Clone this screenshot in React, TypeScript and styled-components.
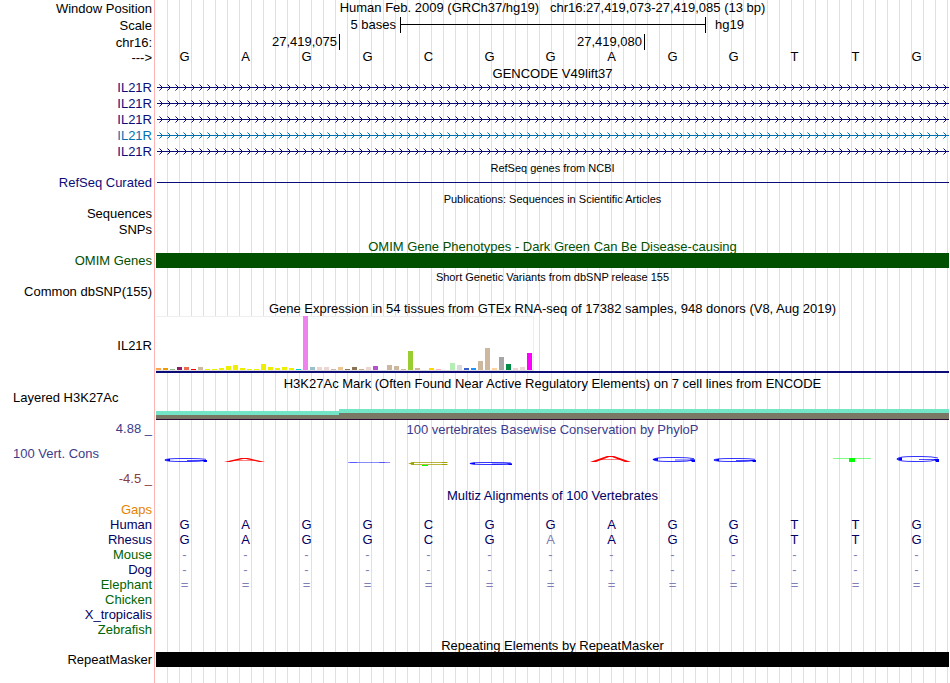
import React from "react";
import styled, { createGlobalStyle } from "styled-components";

const NAVY = "#0c0c78";
const INK_BLUE = "#000064";
const DARK_GREEN = "#005000";

const GlobalStyle = createGlobalStyle`
  body {
    margin: 0;
    background: #fff;
    color: #000;
    font: 13px/15px "Liberation Sans", Arial, Helvetica, sans-serif;
  }
`;

const Browser = styled.main`
  box-sizing: border-box;
  min-height: 100vh;
  padding-right: 1px;
  background:
    linear-gradient(#ffb4b4, #ffb4b4) 154px 0 / 1px 100% no-repeat,
    repeating-linear-gradient(90deg, transparent 0 11px, #dcdcff 11px 12px) 156px 0 / 100% 100% no-repeat;
  background-clip: content-box;
  background-origin: content-box;
`;

const Row = styled.section<{ $height: number }>`
  display: grid;
  grid-template-columns: 152px 1fr;
  column-gap: 4px;
  height: ${(p) => p.$height}px;
  white-space: nowrap;
`;

const Label = styled.div<{ $color?: string; $top?: number; $left?: boolean }>`
  box-sizing: border-box;
  padding-top: ${(p) => p.$top ?? 0}px;
  padding-left: 13px;
  text-align: ${(p) => (p.$left ? "left" : "right")};
  color: ${(p) => p.$color ?? "inherit"};
`;

const ScaleLabels = styled.div`
  display: flex;
  flex-direction: column;
  gap: 10px;
`;

const Title = styled.h2<{ $color?: string; $top?: number; $small?: boolean }>`
  grid-column: 2;
  margin: 0;
  padding-top: ${(p) => p.$top ?? 0}px;
  font-weight: 400;
  font-size: ${(p) => (p.$small ? 11 : 13)}px;
  line-height: 15px;
  text-align: center;
  white-space: pre;
  color: ${(p) => p.$color ?? "inherit"};
`;

const ScaleGrid = styled.div`
  display: grid;
  grid-template-columns: 4fr 5fr 4fr;
  height: 16px;
`;

const ScaleStart = styled.div`
  padding-right: 4px;
  text-align: right;
`;

const ScaleBar = styled.div`
  border-left: 1px solid #000;
  background: linear-gradient(#000, #000) 0 7px / 100% 1px no-repeat;
`;

const ScaleEnd = styled.div`
  padding-left: 9px;
  border-left: 1px solid #000;
`;

const RulerGrid = styled.div`
  display: grid;
  grid-template-columns: 3fr 5fr 5fr;
`;

const RulerCell = styled.div<{ $tick?: boolean }>`
  padding: 1px 2px 0 0;
  line-height: 14px;
  text-align: right;
  border-left: ${(p) => (p.$tick ? "1px solid #000" : "0")};
`;

const Bases = styled.div<{ $color?: string }>`
  display: grid;
  grid-template-columns: repeat(13, 1fr);
  margin: 0 2px 0 -2px;
  text-align: center;
  color: ${(p) => p.$color ?? "inherit"};
`;

const Base = styled.span<{ $faded?: boolean }>`
  color: ${(p) => (p.$faded ? "#8080b8" : "inherit")};
`;

const Bar = styled.div<{ $color: string }>`
  height: 15px;
  background: ${(p) => p.$color};
`;

const Drawing = styled.svg`
  display: block;
  width: 100%;
  height: 100%;
`;

const GtexArea = styled.div`
  border-bottom: 2px solid ${NAVY};
`;

const GtexChart = styled.div`
  box-sizing: border-box;
  display: flex;
  align-items: flex-end;
  gap: 2px;
  width: 378px;
  height: 55px;
  background: #fff;
  box-shadow: inset -1px 1px #eee, inset 0 -1px #ddd;
`;

const Tissue = styled.div<{ $color: string; $height: number }>`
  width: 5px;
  height: ${(p) => p.$height}px;
  margin-bottom: 1px;
  background: ${(p) => p.$color};
`;

const Histone = styled.div`
  display: grid;
  grid-template-columns: 3fr 10fr;
  align-items: end;
  height: 30px;
`;

const Signal = styled.div<{ $height: number }>`
  height: ${(p) => p.$height}px;
  border-top: 4px solid #73e6c8;
  border-bottom: 1px solid #280a32;
  background: #787864;
`;

const Conservation = styled.div`
  display: flex;
  flex-direction: column;
`;

const LogoGrid = styled.div`
  display: grid;
  grid-template-columns: repeat(13, 1fr);
  flex: 1;
`;

const tissues: [string, number][] = [
  ["#ffa54f", 2], ["#ee9a00", 2], ["#8fbc8f", 1], ["#8b1c62", 3], ["#ee6a50", 3], ["#ff0000", 1],
  ["#cdb79e", 3], ["#eeee00", 1], ["#eeee00", 1], ["#eeee00", 2], ["#eeee00", 4], ["#eeee00", 5],
  ["#eeee00", 2], ["#eeee00", 1], ["#eeee00", 1], ["#eeee00", 6], ["#eeee00", 3], ["#eeee00", 2],
  ["#eeee00", 3], ["#eeee00", 2], ["#00cdcd", 1], ["#ee82ee", 54], ["#9ac0cd", 3], ["#eed5d2", 3],
  ["#eed5d2", 3], ["#cdb79e", 1], ["#eec591", 3], ["#8b7355", 1], ["#8b7355", 3], ["#cdaa7d", 1],
  ["#eed5d2", 3], ["#b452cd", 4], ["#7a378b", 0], ["#cdb79e", 5], ["#cdb79e", 4], ["#cdb79e", 1],
  ["#9acd32", 19], ["#cdb79e", 2], ["#7a67ee", 0], ["#ffd700", 2], ["#ffb6c1", 1], ["#cd9b1d", 0],
  ["#b4eeb4", 7], ["#d9d9d9", 5], ["#3a5fcd", 2], ["#1e90ff", 2], ["#cdb79e", 9], ["#cdb79e", 22],
  ["#ffd39b", 2], ["#a6a6a6", 13], ["#008b45", 6], ["#eed5d2", 2], ["#eed5d2", 3], ["#ff00ff", 17],
];

const sequence = [..."GAGGCGGAGGTTG"];
const rhesus = [..."GAGGCGAAGGTTG"];

const genes = [NAVY, NAVY, NAVY, "#0070b0", NAVY];

const species: { name: string; color: string; bases: string[]; tint: string }[] = [
  { name: "Gaps", color: "#e68200", bases: [], tint: INK_BLUE },
  { name: "Human", color: INK_BLUE, bases: sequence, tint: INK_BLUE },
  { name: "Rhesus", color: INK_BLUE, bases: rhesus, tint: INK_BLUE },
  { name: "Mouse", color: "#006400", bases: Array(13).fill("-"), tint: "#8080b8" },
  { name: "Dog", color: INK_BLUE, bases: Array(13).fill("-"), tint: "#8080b8" },
  { name: "Elephant", color: "#006400", bases: Array(13).fill("="), tint: "#8080b8" },
  { name: "Chicken", color: "#006400", bases: [], tint: INK_BLUE },
  { name: "X_tropicalis", color: INK_BLUE, bases: [], tint: INK_BLUE },
  { name: "Zebrafish", color: "#006400", bases: [], tint: INK_BLUE },
];

function GeneLine({ color, id, arrows }: { color: string; id: string; arrows?: boolean }) {
  return (
    <Drawing shapeRendering="crispEdges" aria-hidden="true">
      <defs>
        <pattern id={id} x="1" y="0" width="8" height="16" patternUnits="userSpaceOnUse">
          <path d="M3 5h1v1h-1zM4 6h1v1h-1zM4 8h1v1h-1zM3 9h1v1h-1z" fill={color} />
          <path d="M2 4h1v1h-1zM2 10h1v1h-1z" fill={color} opacity="0.55" />
        </pattern>
      </defs>
      <rect x="1" y="7" width="100%" height="1" fill={color} />
      {arrows && <rect x="1" width="100%" height="16" fill={`url(#${id})`} />}
    </Drawing>
  );
}

type Glyph = { kind: "G" | "A" | "C" | "T" | "line"; top: number; height: number } | null;

const logos: Glyph[] = [
  { kind: "G", top: 21, height: 4 },
  { kind: "A", top: 21, height: 4 },
  null,
  { kind: "line", top: 25, height: 1 },
  { kind: "C", top: 25, height: 3 },
  { kind: "G", top: 25, height: 3 },
  null,
  { kind: "A", top: 19, height: 6 },
  { kind: "G", top: 20, height: 5 },
  { kind: "G", top: 21, height: 4 },
  null,
  { kind: "T", top: 21, height: 4 },
  { kind: "G", top: 19, height: 6 },
];

function LogoGlyph({ glyph }: { glyph: Glyph }) {
  if (!glyph) return <span />;
  const { kind, top: t, height: h } = glyph;
  const b = t + h;
  const m = t + h / 2;
  return (
    <Drawing viewBox="0 0 61 51" preserveAspectRatio="xMinYMin meet" aria-hidden="true">
      {kind === "G" && (
        <g fill="none" stroke="#00f">
          <path
            d={`M50 ${t + h / 3}Q44 ${t + 0.5} 34 ${t + 0.5}H26Q10 ${t + 0.5} 9 ${m}Q10 ${b - 0.5} 26 ${b - 0.5}H34Q44 ${b - 0.5} 49 ${m + 0.5}`}
            strokeWidth="0.8"
          />
          <path d={`M31 ${m + 0.5}H51`} strokeWidth="0.7" />
          <path d={`M8 ${m}L14 ${t + h / 5}V${b - h / 5}zM46 ${m}H51V${b}H48z`} fill="#00f" stroke="none" />
        </g>
      )}
      {kind === "A" && (
        <g fill="#f00">
          <path d={`M7 ${b}L24 ${t}H31L48 ${b}H42L29 ${t + 1}H26L13 ${b}z`} />
          <rect x="17" y={m} width="21" height="1" opacity="0.5" />
        </g>
      )}
      {kind === "C" && (
        <>
          <g fill="#a0a000">
            <rect x="11" y={t} width="36" height="1" opacity="0.75" />
            <rect x="11" y={t + 2} width="36" height="1" opacity="0.75" />
            <path d={`M8 ${t + 1.5}L14 ${t}V${b}zM42 ${t}h5l1 1h-6zM42 ${b}h5l1 -1h-6z`} />
          </g>
          <rect x="22" y={b} width="6" height="1" fill="#0f0" />
        </>
      )}
      {kind === "T" && (
        <g fill="#0f0">
          <rect x="6" y={t} width="38" height="1" opacity="0.5" />
          <rect x="22" y={t} width="6" height={h} />
        </g>
      )}
      {kind === "line" && (
        <g fill="#00f" opacity="0.65">
          <rect x="9" y={t} width="42" height="1" opacity="0.7" />
          <rect x="11" y={t} width="7" height="1" />
          <rect x="40" y={t} width="6" height="1" />
        </g>
      )}
    </Drawing>
  );
}

export default function App() {
  return (
    <>
      <GlobalStyle />
      <Browser>
        <Row $height={17}>
          <Label $top={1}>Window Position</Label>
          <Title>{"Human Feb. 2009 (GRCh37/hg19)   chr16:27,419,073-27,419,085 (13 bp)"}</Title>
        </Row>
        <Row $height={17}>
          <Label $top={1}>Scale</Label>
          <ScaleGrid>
            <ScaleStart>5 bases</ScaleStart>
            <ScaleBar />
            <ScaleEnd>hg19</ScaleEnd>
          </ScaleGrid>
        </Row>
        <Row $height={15}>
          <Label $top={1}>chr16:</Label>
          <RulerGrid>
            <RulerCell>27,419,075</RulerCell>
            <RulerCell $tick>27,419,080</RulerCell>
            <RulerCell $tick />
          </RulerGrid>
        </Row>
        <Row $height={17}>
          <Label $top={1}>{"--->"}</Label>
          <Bases>
            {sequence.map((base, i) => (
              <Base key={i}>{base}</Base>
            ))}
          </Bases>
        </Row>
        <Row $height={14}>
          <Title>GENCODE V49lift37</Title>
        </Row>
        {genes.map((color, i) => (
          <Row key={i} $height={16}>
            <Label $color={color}>IL21R</Label>
            <GeneLine id={`gene-${i}`} color={color} arrows />
          </Row>
        ))}
        <Row $height={15}>
          <Title $small $top={1}>RefSeq genes from NCBI</Title>
        </Row>
        <Row $height={16}>
          <Label $color={NAVY}>RefSeq Curated</Label>
          <GeneLine id="refseq" color={NAVY} />
        </Row>
        <Row $height={15}>
          <Title $small $top={1}>Publications: Sequences in Scientific Articles</Title>
        </Row>
        <Row $height={16}>
          <Label>Sequences</Label>
        </Row>
        <Row $height={16}>
          <Label>SNPs</Label>
        </Row>
        <Row $height={15}>
          <Title $color={DARK_GREEN} $top={1}>OMIM Gene Phenotypes - Dark Green Can Be Disease-causing</Title>
        </Row>
        <Row $height={15}>
          <Label $color={DARK_GREEN}>OMIM Genes</Label>
          <Bar $color={DARK_GREEN} />
        </Row>
        <Row $height={16}>
          <Title $small $top={2}>Short Genetic Variants from dbSNP release 155</Title>
        </Row>
        <Row $height={16}>
          <Label>Common dbSNP(155)</Label>
        </Row>
        <Row $height={16}>
          <Title $top={1}>Gene Expression in 54 tissues from GTEx RNA-seq of 17382 samples, 948 donors (V8, Aug 2019)</Title>
        </Row>
        <Row $height={57}>
          <Label $top={22}>IL21R</Label>
          <GtexArea>
            <GtexChart>
              {tissues.map(([color, height], i) => (
                <Tissue key={i} $color={color} $height={height} />
              ))}
            </GtexChart>
          </GtexArea>
        </Row>
        <Row $height={17}>
          <Title $top={3}>H3K27Ac Mark (Often Found Near Active Regulatory Elements) on 7 cell lines from ENCODE</Title>
        </Row>
        <Row $height={31}>
          <Label $left>Layered H3K27Ac</Label>
          <Histone>
            <Signal $height={4} />
            <Signal $height={6} />
          </Histone>
        </Row>
        <Row $height={67}>
          <ScaleLabels>
            <Label $color="#3c3c8c">4.88 _</Label>
            <Label $color="#3c3c8c" $left>100 Vert. Cons</Label>
            <Label $color="#8c3c3c">-4.5 _</Label>
          </ScaleLabels>
          <Conservation>
            <Title $color="#3c3c8c" $top={1}>100 vertebrates Basewise Conservation by PhyloP</Title>
            <LogoGrid>
              {logos.map((glyph, i) => (
                <LogoGlyph key={i} glyph={glyph} />
              ))}
            </LogoGrid>
          </Conservation>
        </Row>
        <Row $height={14}>
          <Title $color={INK_BLUE}>Multiz Alignments of 100 Vertebrates</Title>
        </Row>
        {species.map(({ name, color, bases, tint }) => (
          <Row key={name} $height={15}>
            <Label $color={color}>{name}</Label>
            <Bases $color={tint}>
              {bases.map((base, i) => (
                <Base key={i} $faded={name === "Rhesus" && base !== sequence[i]}>{base}</Base>
              ))}
            </Bases>
          </Row>
        ))}
        <Row $height={15}>
          <Title $top={1}>Repeating Elements by RepeatMasker</Title>
        </Row>
        <Row $height={15}>
          <Label>RepeatMasker</Label>
          <Bar $color="#000" />
        </Row>
      </Browser>
    </>
  );
}
